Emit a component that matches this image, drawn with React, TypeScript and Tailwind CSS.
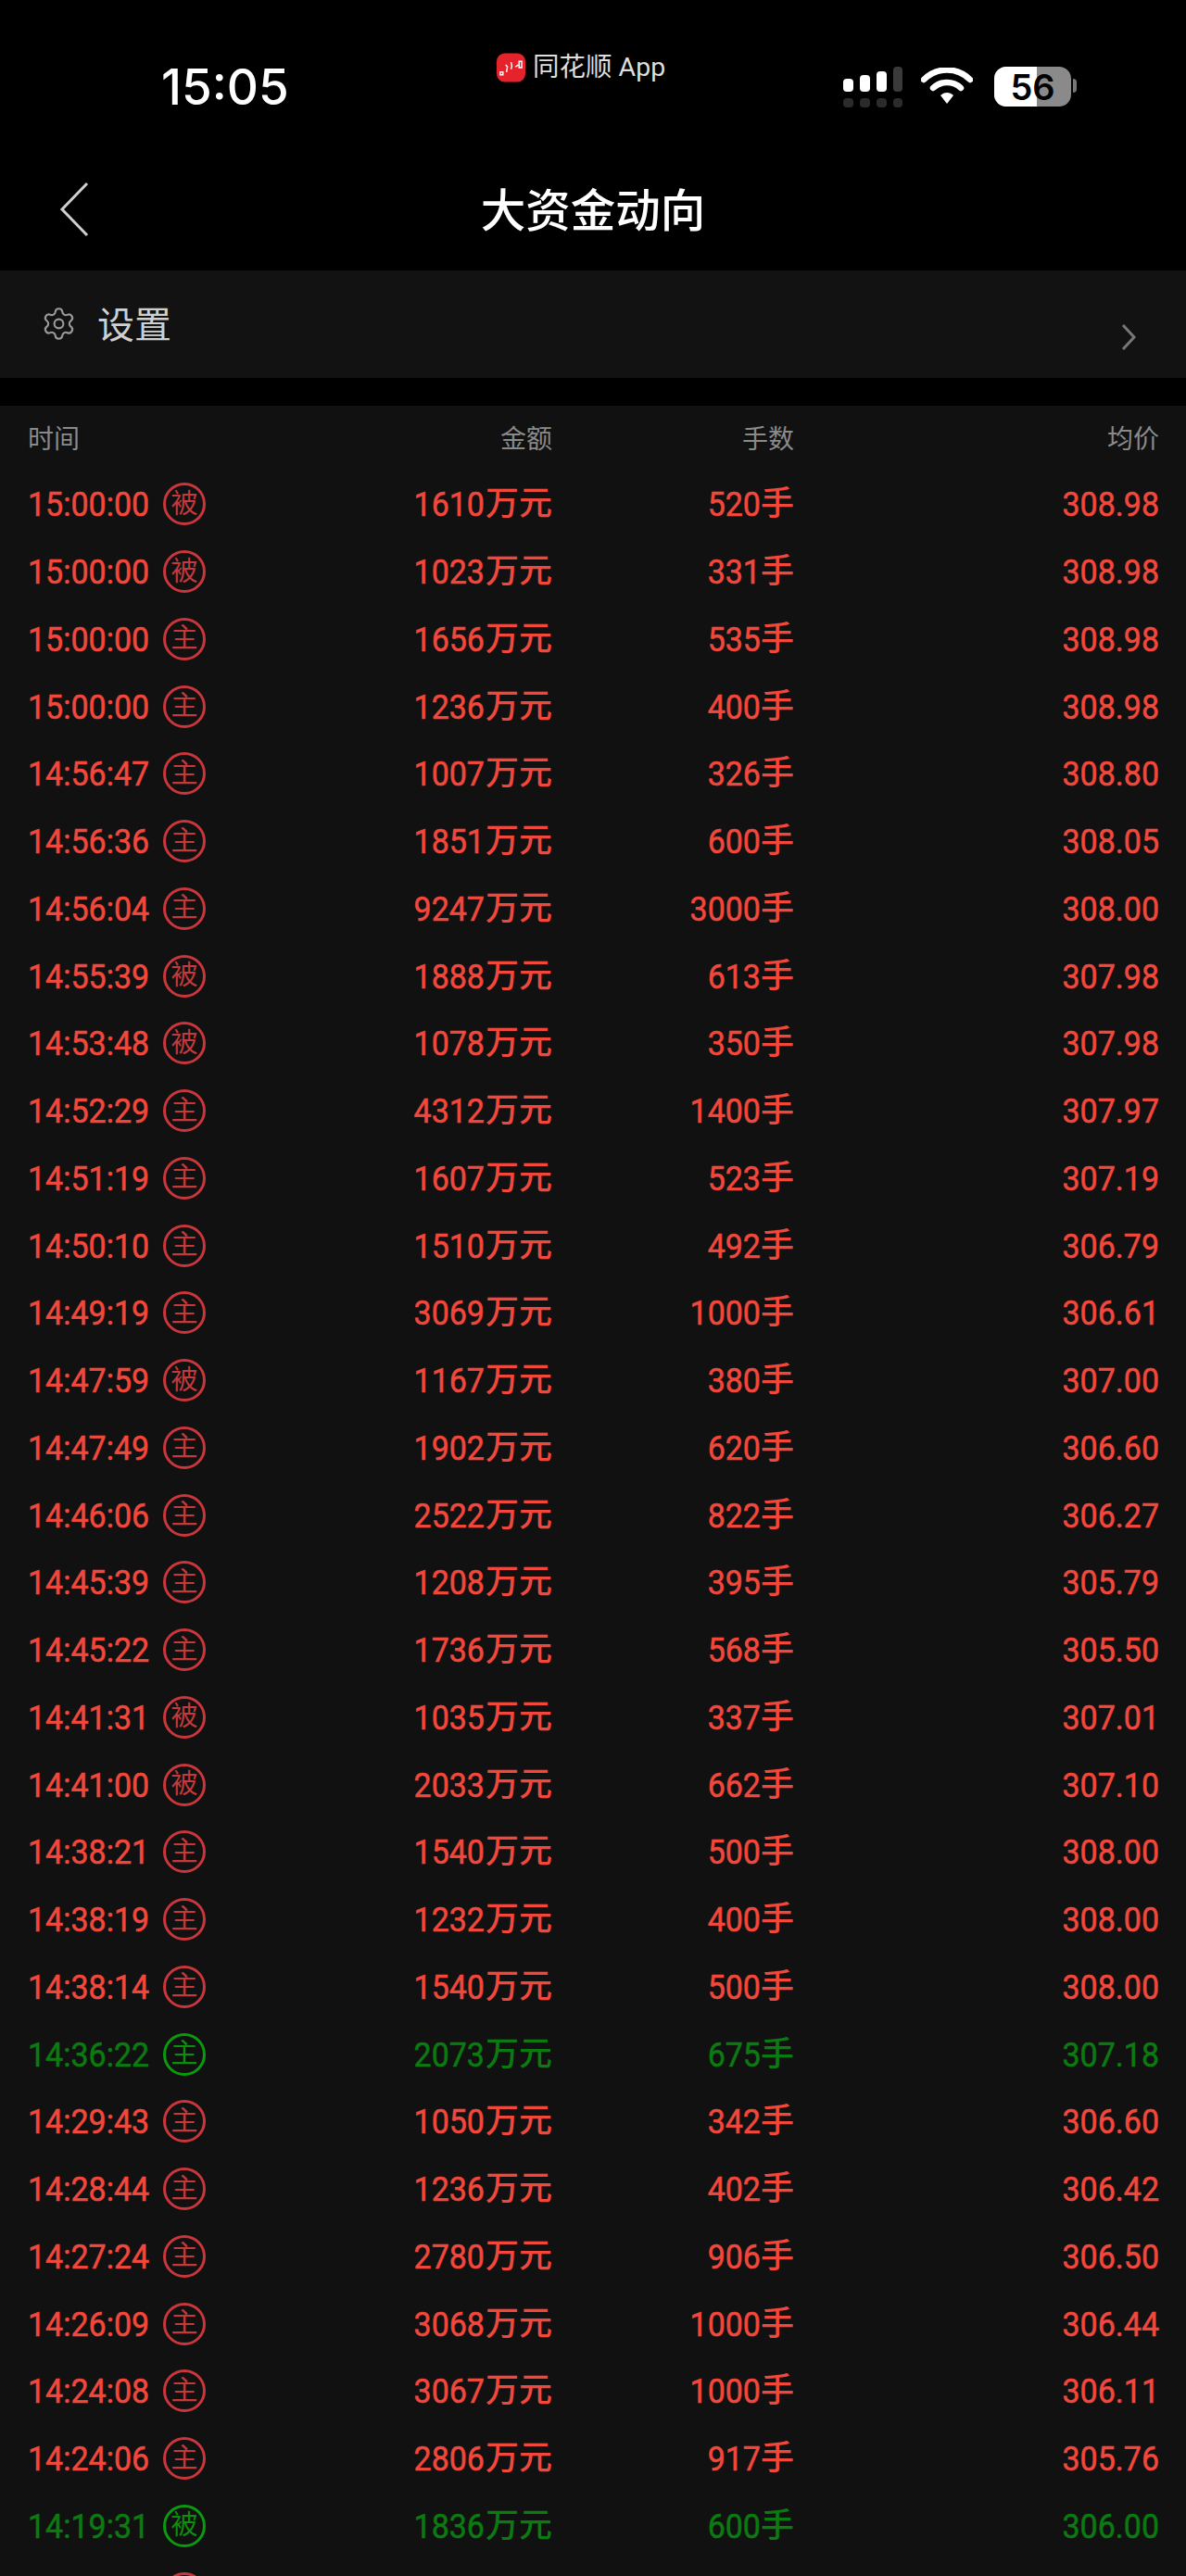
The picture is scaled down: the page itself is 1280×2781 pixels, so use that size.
import { Settings } from 'lucide-react';

type Row = { time: string; tag: '主' | '被'; amount: string; lots: string; price: string; down?: boolean };

const rows: Row[] = [
  { time: '15:00:00', tag: '被', amount: '1610', lots: '520', price: '308.98' },
  { time: '15:00:00', tag: '被', amount: '1023', lots: '331', price: '308.98' },
  { time: '15:00:00', tag: '主', amount: '1656', lots: '535', price: '308.98' },
  { time: '15:00:00', tag: '主', amount: '1236', lots: '400', price: '308.98' },
  { time: '14:56:47', tag: '主', amount: '1007', lots: '326', price: '308.80' },
  { time: '14:56:36', tag: '主', amount: '1851', lots: '600', price: '308.05' },
  { time: '14:56:04', tag: '主', amount: '9247', lots: '3000', price: '308.00' },
  { time: '14:55:39', tag: '被', amount: '1888', lots: '613', price: '307.98' },
  { time: '14:53:48', tag: '被', amount: '1078', lots: '350', price: '307.98' },
  { time: '14:52:29', tag: '主', amount: '4312', lots: '1400', price: '307.97' },
  { time: '14:51:19', tag: '主', amount: '1607', lots: '523', price: '307.19' },
  { time: '14:50:10', tag: '主', amount: '1510', lots: '492', price: '306.79' },
  { time: '14:49:19', tag: '主', amount: '3069', lots: '1000', price: '306.61' },
  { time: '14:47:59', tag: '被', amount: '1167', lots: '380', price: '307.00' },
  { time: '14:47:49', tag: '主', amount: '1902', lots: '620', price: '306.60' },
  { time: '14:46:06', tag: '主', amount: '2522', lots: '822', price: '306.27' },
  { time: '14:45:39', tag: '主', amount: '1208', lots: '395', price: '305.79' },
  { time: '14:45:22', tag: '主', amount: '1736', lots: '568', price: '305.50' },
  { time: '14:41:31', tag: '被', amount: '1035', lots: '337', price: '307.01' },
  { time: '14:41:00', tag: '被', amount: '2033', lots: '662', price: '307.10' },
  { time: '14:38:21', tag: '主', amount: '1540', lots: '500', price: '308.00' },
  { time: '14:38:19', tag: '主', amount: '1232', lots: '400', price: '308.00' },
  { time: '14:38:14', tag: '主', amount: '1540', lots: '500', price: '308.00' },
  { time: '14:36:22', tag: '主', amount: '2073', lots: '675', price: '307.18', down: true },
  { time: '14:29:43', tag: '主', amount: '1050', lots: '342', price: '306.60' },
  { time: '14:28:44', tag: '主', amount: '1236', lots: '402', price: '306.42' },
  { time: '14:27:24', tag: '主', amount: '2780', lots: '906', price: '306.50' },
  { time: '14:26:09', tag: '主', amount: '3068', lots: '1000', price: '306.44' },
  { time: '14:24:08', tag: '主', amount: '3067', lots: '1000', price: '306.11' },
  { time: '14:24:06', tag: '主', amount: '2806', lots: '917', price: '305.76' },
  { time: '14:19:31', tag: '被', amount: '1836', lots: '600', price: '306.00', down: true },
];

function Num({ children }: { children: string }) {
  return <span className="inline-block scale-y-[1.07] text-[34px] font-normal [-webkit-text-stroke:0.5px_currentColor]">{children}</span>;
}

function Badge({ tag, down }: { tag?: string; down?: boolean }) {
  return (
    <span
      className={
        'flex size-[46px] shrink-0 items-center justify-center rounded-full border-[3.5px] text-[29px] font-normal leading-none ' +
        (down ? 'border-[#0b9a0d] text-[#0b8f0d]' : 'border-[#c9363b] text-[#c23a3c]')
      }
    >
      {tag}
    </span>
  );
}

function TradeRow({ row }: { row: Row }) {
  return (
    <div
      className={
        'grid h-[72.75px] grid-cols-[246px_320px_261px_394px] items-center text-[36px] font-medium leading-none ' +
        (row.down ? 'text-[#0b7a10]' : 'text-[#f2483c]')
      }
    >
      <div className="flex items-center">
        <span className="w-[146px]"><Num>{row.time}</Num></span>
        <Badge tag={row.tag} down={row.down} />
      </div>
      <div className="text-right"><Num>{row.amount}</Num><span className="ml-[1px]">万元</span></div>
      <div className="text-right"><Num>{row.lots}</Num>手</div>
      <div className="text-right"><Num>{row.price}</Num></div>
    </div>
  );
}

function StatusIcons() {
  return (
    <div className="flex items-start">
      <svg width="64" height="44" viewBox="0 0 64 44" className="ml-[2px] mt-[2px]">
        <rect x="0" y="13" width="11" height="14" rx="4" fill="#fff" />
        <rect x="18" y="9" width="11" height="18" rx="4" fill="#fff" />
        <rect x="36" y="5" width="11" height="22" rx="4" fill="#fff" />
        <rect x="54" y="0" width="10" height="27" rx="4" fill="#3a3a3a" />
        <rect x="0" y="34" width="11" height="10" rx="4" fill="#2b2b2b" />
        <rect x="18" y="34" width="11" height="10" rx="4" fill="#2b2b2b" />
        <rect x="36" y="34" width="11" height="10" rx="4" fill="#2b2b2b" />
        <rect x="54" y="34" width="10" height="10" rx="4" fill="#2b2b2b" />
      </svg>
      <svg width="56" height="40" viewBox="0 0 56 40" className="ml-[20px] mt-[3px]">
        <path d="M3 13 C17 -1 39 -1 53 13" stroke="#fff" strokeWidth="6.5" fill="none" strokeLinecap="round" />
        <path d="M13 22 C21 14 35 14 43 22" stroke="#fff" strokeWidth="6.5" fill="none" strokeLinecap="round" />
        <path d="M21 30 C25 26 31 26 35 30 L28 39 Z" fill="#fff" />
      </svg>
      <div className="ml-[23px] flex items-center">
        <div className="relative mt-[2px] h-[43px] w-[83px] overflow-hidden rounded-[13px] bg-[#8a8a8a]">
          <div className="h-full w-[46px] bg-white" />
          <span className="absolute inset-0 flex items-center justify-center font-['Inter',sans-serif] text-[38px] font-semibold leading-none text-black">56</span>
        </div>
        <div className="ml-[2px] h-[15px] w-[4px] rounded-r-full bg-[#777]" />
      </div>
    </div>
  );
}

export default function App() {
  return (
    <div className="h-[2781px] overflow-hidden bg-black font-['Roboto','Noto_Sans_CJK_SC',sans-serif] text-white">
      <div className="flex h-[164px] items-start pl-[174px]">
        <span className="mt-[69px] w-[362px] font-['Inter',sans-serif] text-[53px] font-medium leading-[50px]">15:05</span>
        <div className="mt-[57px] flex w-[372px] items-center">
          <svg width="31" height="32" viewBox="0 0 32 32">
            <rect width="32" height="32" rx="9" fill="#e5232d" />
            <path d="M4 21h3v3H4zM10 13l2 2-1 6M16 10l1 4-1 4M21 15l3-2M25 9h3v7h-3z" stroke="#fff" strokeWidth="1.5" fill="none" />
          </svg>
          <span className="ml-[8px] text-[28.5px] leading-none text-[#dedede]">同花顺 App</span>
        </div>
        <div className="mt-[70px]"><StatusIcons /></div>
      </div>

      <div className="relative flex h-[128px] items-center justify-center pt-[2px]">
        <svg width="34" height="60" viewBox="0 0 34 60" className="absolute left-[62px] top-[32px]">
          <polyline points="32,2 5,30 32,58" fill="none" stroke="#cfcfcf" strokeWidth="3" />
        </svg>
        <h1 className="text-[48.5px] font-medium leading-none">大资金动向</h1>
      </div>

      <div className="flex h-[116px] items-center bg-[#121212] pl-[44px] pr-[53px]">
        <Settings size={39} strokeWidth={1.3} className="mb-[2px] text-[#9a9a9a]" />
        <span className="ml-[22px] mt-[3px] text-[40px] leading-none text-[#cfcfcf]">设置</span>
        <svg width="18" height="30" viewBox="0 0 18 30" className="ml-auto mt-[27px]">
          <polyline points="3,2 15,15 3,28" fill="none" stroke="#777" strokeWidth="3" />
        </svg>
      </div>

      <div className="mt-[30px] min-h-[2343px] bg-[#111111] pl-[30px]">
        <div className="grid h-[70px] grid-cols-[246px_320px_261px_394px] items-center pt-[4px] text-[28px] leading-none text-[#8a8a8a]">
          <div>时间</div>
          <div className="text-right">金额</div>
          <div className="text-right">手数</div>
          <div className="text-right">均价</div>
        </div>
        {rows.map((row, i) => (
          <TradeRow key={i} row={row} />
        ))}
        <div className="flex h-[72.75px] items-center pl-[146px]">
          <Badge />
        </div>
      </div>
    </div>
  );
}
